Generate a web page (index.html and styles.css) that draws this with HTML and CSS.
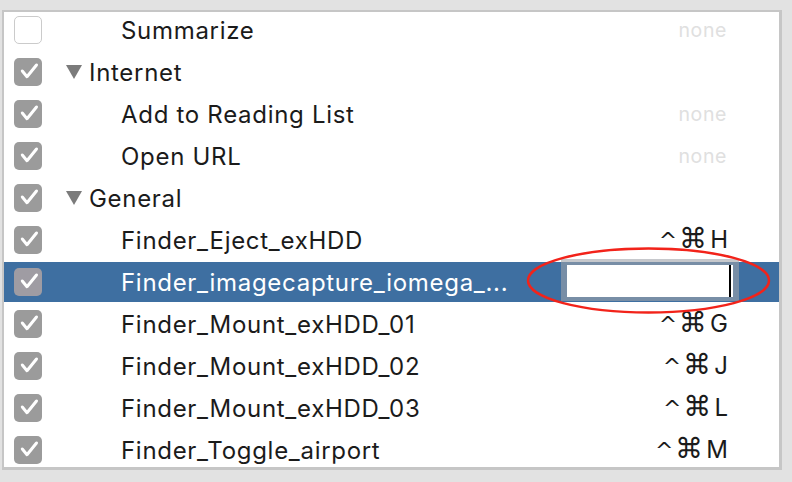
FILE: index.html
```html
<!DOCTYPE html>
<html>
<head>
<meta charset="utf-8">
<link rel="stylesheet" href="styles.css">
</head>
<body>
<div class="panel">
  <div class="list">
    <div class="row"><div class="cell">
      <span class="check off"></span>
      <span class="label item">Summarize</span>
      <span class="key none">none</span>
    </div></div>
    <div class="row"><div class="cell">
      <span class="check on"><svg viewBox="0 0 28 28"><path d="M8.3 13 L13 18.7 L22.5 7" /></svg></span>
      <svg class="disclosure" viewBox="0 0 16 14"><polygon points="0,0 16,0 8,14" /></svg>
      <span class="label group">Internet</span>
    </div></div>
    <div class="row"><div class="cell">
      <span class="check on"><svg viewBox="0 0 28 28"><path d="M8.3 13 L13 18.7 L22.5 7" /></svg></span>
      <span class="label item">Add to Reading List</span>
      <span class="key none">none</span>
    </div></div>
    <div class="row"><div class="cell">
      <span class="check on"><svg viewBox="0 0 28 28"><path d="M8.3 13 L13 18.7 L22.5 7" /></svg></span>
      <span class="label item">Open URL</span>
      <span class="key none">none</span>
    </div></div>
    <div class="row"><div class="cell">
      <span class="check on"><svg viewBox="0 0 28 28"><path d="M8.3 13 L13 18.7 L22.5 7" /></svg></span>
      <svg class="disclosure" viewBox="0 0 16 14"><polygon points="0,0 16,0 8,14" /></svg>
      <span class="label group">General</span>
    </div></div>
    <div class="row"><div class="cell">
      <span class="check on"><svg viewBox="0 0 28 28"><path d="M8.3 13 L13 18.7 L22.5 7" /></svg></span>
      <span class="label item">Finder_Eject_exHDD</span>
      <span class="key"><span class="ctl">^</span><span class="cmd">⌘</span>H</span>
    </div></div>
    <div class="row"><div class="cell selected">
      <span class="check on"><svg viewBox="0 0 28 28"><path d="M8.3 13 L13 18.7 L22.5 7" /></svg></span>
      <span class="label item">Finder_imagecapture_iomega_...</span>
      <span class="field"><span class="caret"></span></span>
    </div></div>
    <div class="row"><div class="cell">
      <span class="check on"><svg viewBox="0 0 28 28"><path d="M8.3 13 L13 18.7 L22.5 7" /></svg></span>
      <span class="label item">Finder_Mount_exHDD_01</span>
      <span class="key"><span class="ctl">^</span><span class="cmd">⌘</span>G</span>
    </div></div>
    <div class="row"><div class="cell">
      <span class="check on"><svg viewBox="0 0 28 28"><path d="M8.3 13 L13 18.7 L22.5 7" /></svg></span>
      <span class="label item">Finder_Mount_exHDD_02</span>
      <span class="key"><span class="ctl">^</span><span class="cmd">⌘</span>J</span>
    </div></div>
    <div class="row"><div class="cell">
      <span class="check on"><svg viewBox="0 0 28 28"><path d="M8.3 13 L13 18.7 L22.5 7" /></svg></span>
      <span class="label item">Finder_Mount_exHDD_03</span>
      <span class="key"><span class="ctl">^</span><span class="cmd">⌘</span>L</span>
    </div></div>
    <div class="row"><div class="cell">
      <span class="check on"><svg viewBox="0 0 28 28"><path d="M8.3 13 L13 18.7 L22.5 7" /></svg></span>
      <span class="label item">Finder_Toggle_airport</span>
      <span class="key"><span class="ctl">^</span><span class="cmd">⌘</span>M</span>
    </div></div>
  </div>
</div>
<svg class="annotation" viewBox="0 0 792 482"><ellipse cx="648.5" cy="280.5" rx="120.5" ry="32" /></svg>
</body>
</html>
```
FILE: styles.css
```css
html, body {
  margin: 0;
  padding: 0;
}
body {
  background: #e2e2e2;
  width: 792px;
  height: 482px;
  overflow: hidden;
  position: relative;
  font-family: "Inter", "Roboto", "Liberation Sans", sans-serif;
  color: #1b1b1b;
}
.panel {
  margin: 10px 0 0 2px;
  width: 775px;
  height: 455px;
  background: #ffffff;
  border-style: solid;
  border-color: #c6c6c6;
  border-width: 2px 3px 3px 2px;
  overflow: hidden;
}
.list {
  margin-top: -3px;
}
.row {
  height: 42px;
  padding: 1px 0;
  box-sizing: border-box;
}
.cell {
  height: 40px;
  display: flex;
  align-items: center;
  padding-left: 10px;
  padding-right: 51px;
}
.cell.selected {
  background: #3e6fa1;
  color: #ffffff;
  padding-right: 40px;
}
.check {
  width: 28px;
  height: 28px;
  box-sizing: border-box;
  border-radius: 5px;
  flex: none;
  display: flex;
}
.check.off {
  background: #ffffff;
  border: 1px solid #cbcbcb;
}
.check.on {
  background: #9b9b9b;
}
.selected .check.on {
  background: #9f9ca3;
}
.check svg {
  width: 28px;
  height: 28px;
}
.check path {
  fill: none;
  stroke: #ffffff;
  stroke-width: 3;
  stroke-linecap: round;
  stroke-linejoin: round;
}
.disclosure {
  width: 16px;
  height: 14px;
  margin-left: 24px;
  flex: none;
}
.disclosure polygon {
  fill: #7b7b7b;
}
.label {
  font-size: 24px;
  white-space: nowrap;
  letter-spacing: 0.7px;
}
.label.group {
  margin-left: 7px;
}
.label.item {
  margin-left: 79px;
}
.key {
  margin-left: auto;
  font-size: 24px;
  line-height: 28px;
  white-space: nowrap;
  display: flex;
  align-items: baseline;
}
.key .ctl {
  font-size: 22px;
  font-family: "DejaVu Sans", sans-serif;
  margin-right: 2px;
}
.key .cmd {
  font-size: 28px;
  font-family: "DejaVu Sans", sans-serif;
  margin-right: 3px;
}
.key.none {
  font-size: 19.5px;
  letter-spacing: 0.6px;
  color: #e0e0e0;
  margin-right: 1px;
  display: block;
}
.field {
  margin-left: auto;
  width: 178px;
  height: 42px;
  box-sizing: border-box;
  margin-top: -4px;
  border: 6px solid rgba(160, 164, 170, 0.6);
  border-bottom-width: 4px;
  background: #ffffff;
  background-clip: padding-box;
  display: flex;
  justify-content: flex-end;
  align-items: stretch;
  padding: 0 2px 0 0;
}
.caret {
  width: 2px;
  background: #000000;
}
.annotation {
  position: absolute;
  left: 0;
  top: 0;
  width: 792px;
  height: 482px;
  pointer-events: none;
}
.annotation ellipse {
  fill: none;
  stroke: #f2231a;
  stroke-width: 2.5;
}
```
